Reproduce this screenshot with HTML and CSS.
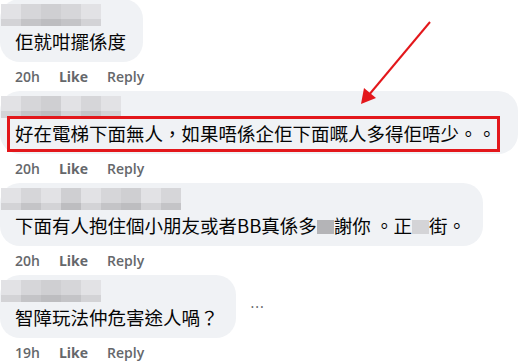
FILE: index.html
```html
<!DOCTYPE html>
<html lang="zh-Hant">

<head>
    <meta charset="UTF-8">
    <meta name="viewport" content="width=device-width, initial-scale=1.0">
    <title>Comments</title>
    <link rel="stylesheet" href="styles.css">
</head>

<body>
    <div class="thread">
        <!-- comment 1 -->
        <div class="comment first">
            <div class="bubble">
                <div class="name">
                    <span class="px s1"></span><span class="px s2"></span><span class="px s3"></span><span class="px s2"></span><span class="px s1"></span>
                </div>
                <div class="text">佢就咁擺係度</div>
            </div>
            <div class="meta"><span>20h</span><b>Like</b><span>Reply</span></div>
        </div>

        <!-- comment 2 (marked) -->
        <div class="comment">
            <div class="bubble wide">
                <div class="name">
                    <span class="px s1"></span><span class="px s2"></span><span class="px s3"></span><span class="px s1"></span><span class="px s2"></span><span class="px s1"></span>
                </div>
                <div class="text"><span class="marked">好在電梯下面無人，如果唔係企佢下面嘅人多得佢唔少。。</span></div>
            </div>
            <div class="meta"><span>20h</span><b>Like</b><span>Reply</span></div>
        </div>

        <!-- comment 3 -->
        <div class="comment">
            <div class="bubble">
                <div class="name">
                    <span class="px s1"></span><span class="px s2"></span><span class="px s1"></span><span class="px s3"></span><span class="px s1"></span><span class="px s2"></span><span class="px s3"></span><span class="px s1"></span><span class="px s2"></span>
                </div>
                <div class="text">下面有人抱住個小朋友或者BB真係多<span class="hide dark"></span>謝你 。正<span class="hide light"></span>街。</div>
            </div>
            <div class="meta"><span>20h</span><b>Like</b><span>Reply</span></div>
        </div>

        <!-- comment 4 -->
        <div class="comment">
            <div class="row">
                <div class="bubble">
                    <div class="name">
                        <span class="px s1"></span><span class="px s2"></span><span class="px s3"></span><span class="px s2"></span><span class="px s1"></span>
                    </div>
                    <div class="text">智障玩法仲危害途人喎？</div>
                </div>
                <div class="more">···</div>
            </div>
            <div class="meta"><span>19h</span><b>Like</b><span>Reply</span></div>
        </div>
    </div>

    <!-- red pointer arrow -->
    <svg class="arrow" width="527" height="364" viewBox="0 0 527 364">
        <line x1="430" y1="22" x2="368" y2="96" stroke="#e3171b" stroke-width="2"/>
        <polygon points="361,104 364,88 376,98" fill="#e3171b"/>
    </svg>
</body>

</html>
```

FILE: styles.css
```css
body {
    margin: 0;
    background-color: #fff;
    font-family: "Noto Sans CJK TC", "Noto Sans", sans-serif;
    color: #050505;
    position: relative;
    overflow: hidden;
}

.thread {
    display: flex;
    flex-direction: column;
}

.comment.first {
    margin-top: -1px;
}

.row {
    display: flex;
    align-items: center;
}

.bubble {
    width: fit-content;
    background-color: #f0f2f5;
    border-radius: 20px;
    padding: 5px 17px 6px 15px;
}

.bubble.wide {
    padding-right: 22px;
}

/* pixelated (hidden) user names */
.name {
    display: flex;
    height: 22px;
    margin-left: -14px;
    filter: blur(0.6px);
}

.px {
    width: 20px;
    height: 100%;
}

.s1 {
    background: linear-gradient(#e2e2e5 70%, #d3d3d6 70%);
}

.s2 {
    background: linear-gradient(#d6d6d9 70%, #c4c4c7 70%);
}

.s3 {
    background: linear-gradient(#cfcfd2 70%, #bdbdc0 70%);
}

.text {
    font-size: 18.5px;
    line-height: 30px;
    height: 30px;
    white-space: nowrap;
}

.marked {
    position: relative;
    display: inline-block;
    vertical-align: top;
}

.marked::after {
    content: '';
    position: absolute;
    top: -2px;
    bottom: -4px;
    left: -8px;
    right: -4px;
    border: 3px solid #e3171b;
}

.hide {
    display: inline-block;
    width: 17px;
    height: 14px;
    vertical-align: -1px;
}

.hide.dark {
    background-color: #b4b4b7;
}

.hide.light {
    background-color: #d4d4d7;
}

.more {
    margin-left: 15px;
    color: #65676b;
    font-family: "Noto Sans", sans-serif;
    font-size: 14px;
    letter-spacing: 1px;
}

.meta {
    display: flex;
    gap: 19px;
    height: 29px;
    align-items: center;
    padding-left: 15px;
    font-family: "Open Sans", "Noto Sans", sans-serif;
    font-size: 14px;
    font-weight: 600;
    color: #65676b;
}

.meta b {
    font-weight: 700;
}

.arrow {
    position: absolute;
    top: 0;
    left: 0;
    pointer-events: none;
}
```
